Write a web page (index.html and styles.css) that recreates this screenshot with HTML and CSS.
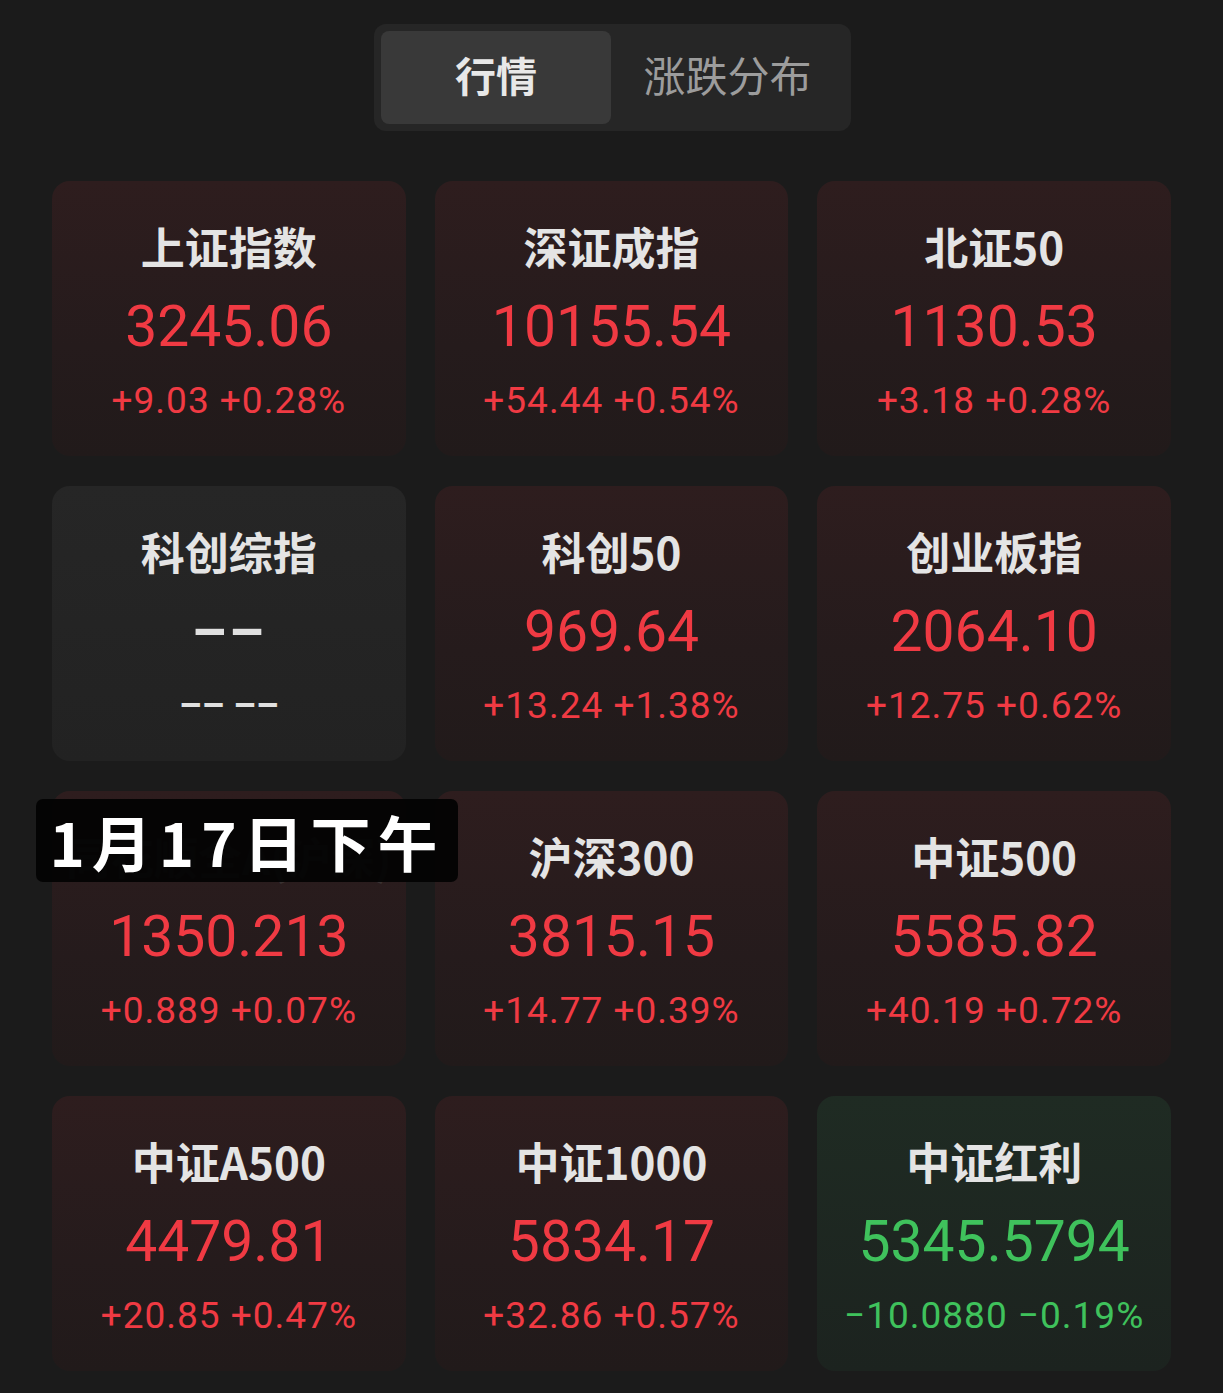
FILE: index.html
```html
<!DOCTYPE html>
<html lang="zh">
<head>
<meta charset="utf-8">
<link rel="stylesheet" href="styles.css">
</head>
<body>
<div class="page">
  <div class="tabs">
    <div class="tab active">行情</div>
    <div class="tab">涨跌分布</div>
  </div>
  <div class="grid">
    <div class="card up">
      <div class="title">上证指数</div>
      <div class="price">3245.06</div>
      <div class="change">+9.03 +0.28%</div>
    </div>
    <div class="card up">
      <div class="title">深证成指</div>
      <div class="price">10155.54</div>
      <div class="change">+54.44 +0.54%</div>
    </div>
    <div class="card up">
      <div class="title">北证50</div>
      <div class="price">1130.53</div>
      <div class="change">+3.18 +0.28%</div>
    </div>
    <div class="card flat">
      <div class="title">科创综指</div>
      <div class="price">––</div>
      <div class="change">–– ––</div>
    </div>
    <div class="card up">
      <div class="title">科创50</div>
      <div class="price">969.64</div>
      <div class="change">+13.24 +1.38%</div>
    </div>
    <div class="card up">
      <div class="title">创业板指</div>
      <div class="price">2064.10</div>
      <div class="change">+12.75 +0.62%</div>
    </div>
    <div class="card up has-caption">
      <div class="title">同花顺全A(沪深)</div>
      <div class="price">1350.213</div>
      <div class="change">+0.889 +0.07%</div>
      <div class="caption">1月17日下午</div>
    </div>
    <div class="card up">
      <div class="title">沪深300</div>
      <div class="price">3815.15</div>
      <div class="change">+14.77 +0.39%</div>
    </div>
    <div class="card up">
      <div class="title">中证500</div>
      <div class="price">5585.82</div>
      <div class="change">+40.19 +0.72%</div>
    </div>
    <div class="card up">
      <div class="title">中证A500</div>
      <div class="price">4479.81</div>
      <div class="change">+20.85 +0.47%</div>
    </div>
    <div class="card up">
      <div class="title">中证1000</div>
      <div class="price">5834.17</div>
      <div class="change">+32.86 +0.57%</div>
    </div>
    <div class="card down">
      <div class="title">中证红利</div>
      <div class="price">5345.5794</div>
      <div class="change">−10.0880 −0.19%</div>
    </div>
  </div>
</div>
</body>
</html>
```

FILE: styles.css
```css
html, body {
  margin: 0;
  padding: 0;
  background: #1b1b1b;
}
body {
  font-family: "Noto Sans CJK SC", "Noto Sans", sans-serif;
  color: #e6e6e6;
}
.page {
  width: 1223px;
  height: 1393px;
  overflow: hidden;
  padding-top: 24px;
  box-sizing: border-box;
}
.tabs {
  width: 477px;
  height: 107px;
  margin: 0 0 0 374px;
  box-sizing: border-box;
  padding: 7px;
  background: #262626;
  border-radius: 12px;
  display: flex;
}
.tab {
  flex: 1;
  display: flex;
  align-items: center;
  justify-content: center;
  font-size: 42px;
  color: #9c9c9c;
  border-radius: 8px;
  padding-bottom: 8px;
  box-sizing: border-box;
}
.tab.active {
  flex: 0 0 230px;
  background: #393939;
  color: #e8e8e8;
  font-weight: 700;
  font-size: 41px;
}
.grid {
  margin: 50px 52px 0 52px;
  display: grid;
  grid-template-columns: minmax(0, 1fr) minmax(0, 1fr) minmax(0, 1fr);
  column-gap: 29px;
  row-gap: 30px;
}
.card {
  position: relative;
  height: 275px;
  border-radius: 18px;
  box-sizing: border-box;
  padding-top: 40px;
  display: flex;
  flex-direction: column;
  align-items: center;
  text-align: center;
}
.card.up {
  background: linear-gradient(180deg, #2e1d1e 0%, #251b1c 60%, #211a1a 100%);
  color: #f03a43;
}
.card.flat {
  background: linear-gradient(180deg, #262626 0%, #222222 100%);
  color: #e0e0e0;
}
.card.down {
  background: linear-gradient(180deg, #1f2b23 0%, #1c231f 100%);
  color: #3fc25c;
}
.title {
  height: 50px;
  line-height: 50px;
  font-size: 44px;
  font-weight: 700;
  color: #e4e4e4;
  white-space: nowrap;
}
.price {
  margin-top: 21px;
  height: 70px;
  line-height: 70px;
  font-family: "Roboto", "Liberation Sans", sans-serif;
  font-size: 57px;
  white-space: nowrap;
}
.change {
  margin-top: 17px;
  height: 44px;
  line-height: 44px;
  font-family: "Roboto", "Liberation Sans", sans-serif;
  font-size: 37px;
  letter-spacing: 1px;
  white-space: nowrap;
}
.card.flat .price,
.card.flat .change {
  font-weight: 700;
  color: #e0e0e0;
}
.card.flat .price {
  font-size: 56px;
  letter-spacing: 2px;
}
.card.flat .change {
  font-size: 36px;
  letter-spacing: 0;
}
.has-caption {
  z-index: 2;
}
.has-caption .title {
  color: #3a3232;
}
.caption {
  position: absolute;
  z-index: 3;
  left: -16px;
  top: 8px;
  width: 422px;
  height: 83px;
  border-radius: 7px;
  background: rgba(3, 3, 3, 0.94);
  color: #ffffff;
  font-family: "Noto Sans CJK SC", sans-serif;
  font-size: 60px;
  font-weight: 700;
  line-height: 83px;
  letter-spacing: 7px;
  text-align: center;
}
```
